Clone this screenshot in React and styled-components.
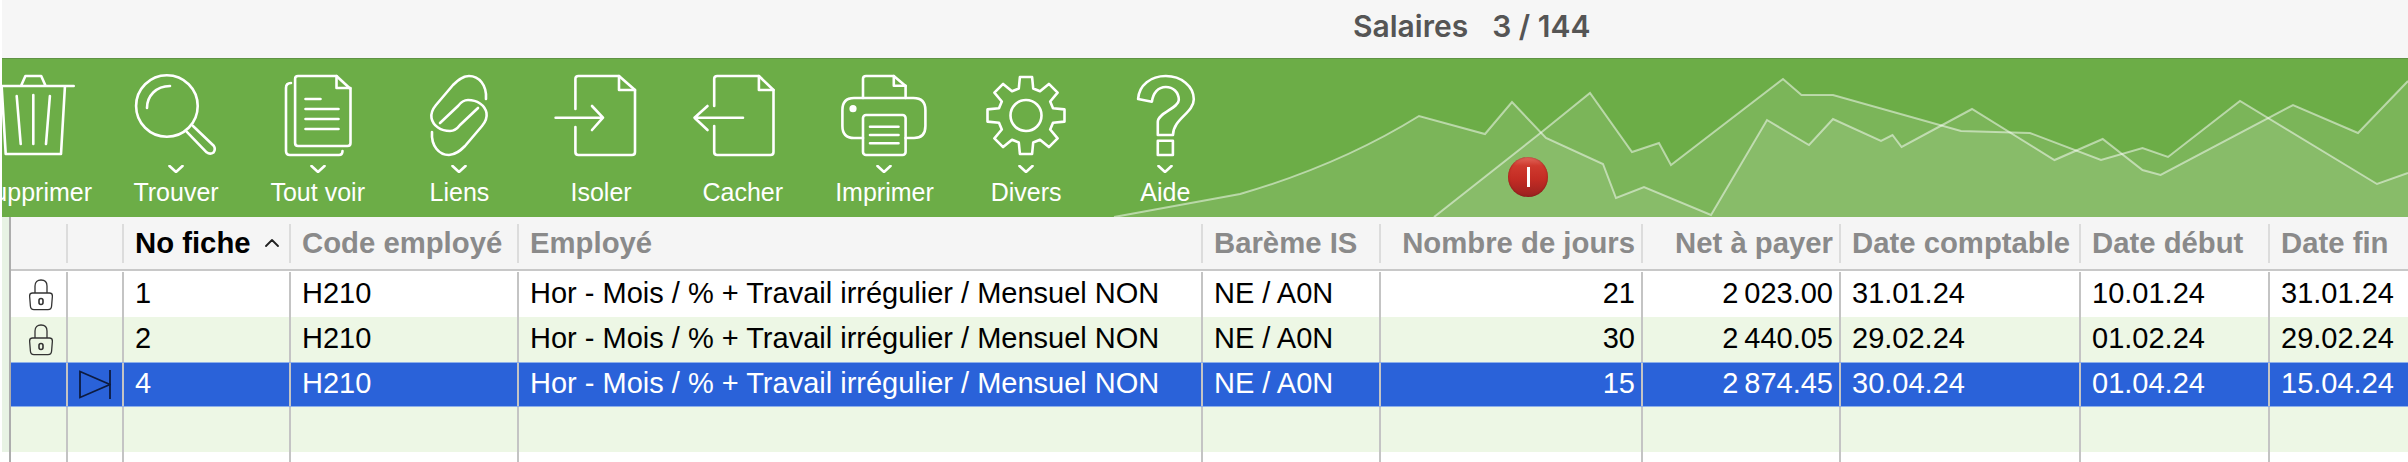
import React from "react";
import styled, { createGlobalStyle } from "styled-components";

const COLUMNS = "57px 56px 167px 228px 684px 178px 262px 198px 240px 189px 1fr";

const GlobalStyle = createGlobalStyle`
  html, body {
    margin: 0;
    padding: 0;
    background: #fff;
    font-family: "Liberation Sans", Arial, sans-serif;
  }
`;

const Page = styled.div`
  width: 2408px;
  height: 462px;
  padding-left: 2px;
  box-sizing: border-box;
  overflow: hidden;
  background: #fff;
`;

const TitleBar = styled.div`
  height: 58px;
  padding-left: 1351px;
  display: flex;
  align-items: center;
  gap: 24px;
  background: #f6f6f6;
  color: #555;
  font-family: Inter, "Liberation Sans", sans-serif;
  font-size: 30px;
  font-weight: 600;
  padding-bottom: 6px;
  box-sizing: border-box;
`;

const Band = styled.div`
  position: relative;
  height: 159px;
  box-sizing: border-box;
  border-top: 1px solid #5f9344;
  background: #6cad47;
  overflow: hidden;
`;

const Chart = styled.svg`
  position: absolute;
  left: -2px;
  top: -59px;
`;

const Toolbar = styled.div`
  position: relative;
  display: flex;
  margin-left: -38.5px;
  padding-top: 16px;
`;

const ToolItem = styled.div`
  flex: 0 0 141.7px;
  margin-left: ${(p) => p.$nudge || 0}px;
  display: flex;
  flex-direction: column;
  align-items: center;
  color: #fff;
`;

const Drop = styled.div`
  height: 8px;
  margin-top: 10px;
  margin-bottom: 5px;
  display: flex;
`;

const ToolLabel = styled.div`
  font-size: 25px;
  line-height: 28px;
  white-space: nowrap;
`;

const Badge = styled.div`
  position: absolute;
  left: 1506px;
  top: 98px;
  width: 40px;
  height: 40px;
  border-radius: 50%;
  background: linear-gradient(#e2685c 0%, #cf3a2e 22%, #c42c24 55%, #9a2120 100%);
  box-shadow: inset 0 0 2px rgba(90, 10, 10, 0.6);
  display: flex;
  align-items: center;
  justify-content: center;

  &::before {
    content: "";
    width: 3px;
    height: 20px;
    background: #fff;
  }
`;

const TableArea = styled.div`
  display: flex;
`;

const Strip = styled.div`
  width: 7px;
  height: 235px;
  background: #e8f3e4;
`;

const Table = styled.div`
  flex: 1;
  min-width: 0;
  border-left: 2px solid #adadad;
  height: 245px;
`;

const HeadRow = styled.div`
  display: grid;
  grid-template-columns: ${COLUMNS};
  align-items: center;
  height: 54px;
  box-sizing: border-box;
  background: #f5f5f5;
  border-bottom: 2px solid #c8c8c8;
`;

const HeadCell = styled.div`
  height: 39px;
  padding: 0 6px 0 11px;
  box-sizing: border-box;
  display: flex;
  align-items: center;
  justify-content: ${(p) => (p.$right ? "flex-end" : "flex-start")};
  gap: 14px;
  border-right: 2px solid #dcdcdc;
  color: ${(p) => (p.$active ? "#000" : "#8a8a8a")};
  font-size: 29.3px;
  font-weight: 700;
  white-space: nowrap;

  &:last-child {
    border-right: 0;
  }
`;

const Body = styled.div`
  padding-top: 1px;
`;

const TONES = {
  white: { bg: "#fff", fg: "#000" },
  green: { bg: "#edf7e5", fg: "#000" },
  selected: { bg: "#2a62d9", fg: "#fff" },
};

const Row = styled.div`
  display: grid;
  grid-template-columns: ${COLUMNS};
  height: 45px;
  box-sizing: border-box;
  background: ${(p) => TONES[p.$tone].bg};
  color: ${(p) => TONES[p.$tone].fg};
  ${(p) => p.$tone === "selected" && "border-top: 1px solid #8eb0ea; border-bottom: 1px solid #8eb0ea;"}
`;

const Cell = styled.div`
  padding: 0 6px 3px 11px;
  box-sizing: border-box;
  display: flex;
  align-items: center;
  justify-content: ${(p) => (p.$right ? "flex-end" : "flex-start")};
  border-right: 2px solid #c4c4c4;
  font-size: 29px;
  white-space: nowrap;

  &:last-child {
    border-right: 0;
  }
`;

const IconCell = styled(Cell)`
  padding: 0 0 0 ${(p) => p.$shift || 0}px;
  justify-content: center;
`;

// drawings

const Icon = ({ children }) => (
  <svg
    width="100"
    height="80"
    viewBox="0 0 100 80"
    fill="none"
    stroke="#fff"
    strokeWidth="2.6"
    strokeLinecap="round"
    strokeLinejoin="round"
    style={{ overflow: "visible", display: "block" }}
  >
    {children}
  </svg>
);

const TrashIcon = () => (
  <Icon>
    <path d="M8.7 11H89.7M37.4 10L41.4 1H57.2L61.2 10M80.9 12L77 79H21.7L17.7 12" />
    <path d="M49.3 20V69M32.7 21L36.7 69M65.9 21L62 69" />
  </Icon>
);

const SearchIcon = () => (
  <Icon>
    <circle cx="40.9" cy="31" r="30.8" />
    <path d="M21 33C21 21 30 11 44 11" />
    <path d="M60.6 56.7L80.6 77.3Q84 80 87.5 77.5Q90 74 87.7 70.7L67 51" />
  </Icon>
);

const DocsIcon = () => (
  <Icon>
    <path d="M30 1H68.5L82.5 14V68Q82.5 71 79.5 71H30Q27.1 71 27.1 68V4Q27.1 1 30 1Z" />
    <path d="M68.5 1V13H82.5" />
    <path d="M23 8Q18 8 18 13V76Q18 80 22 80H71Q74.5 80 74.5 76" />
    <path d="M37.5 24H52.5M37.5 34H70.5M37.5 44H70.5M37.5 54H70.5" />
  </Icon>
);

const LinkIcon = () => (
  <Icon>
    <path d="M77 24C78 10 70 1 60 1C53 1 48 6 44 10L27 30C22 36 22 40 22.5 43C24 51 32 56 41 56C44 56 48 54 51 50L69 33" />
    <path d="M23 57C22 71 30 80 40 80C47 80 52 75 56 71L73 51C78 45 78 41 77.5 38C76 30 68 25 59 25C56 25 52 27 49 31L31 48" />
  </Icon>
);

const ExportIcon = () => (
  <Icon>
    <path d="M24.4 34V4Q24.4 1 27.4 1H68L84 15V77Q84 80 81 80H27.4Q24.4 80 24.4 77V52" />
    <path d="M68 1V15H84" />
    <path d="M4.6 42.7H52M41 31L52 42.7L41 55" />
  </Icon>
);

const ImportIcon = () => (
  <Icon>
    <path d="M21.2 31V4Q21.2 1 24.2 1H65.9L80.5 15V77Q80.5 80 77.5 80H24.2Q21.2 80 21.2 77V51" />
    <path d="M65.9 1V15H80.5" />
    <path d="M50 42.7H1.5M14.5 31L1.5 42.7L14.5 55" />
  </Icon>
);

const PrintIcon = () => (
  <Icon>
    <path d="M29 23V4Q29 1 32 1H59.8L71.6 11V23" />
    <path d="M59.8 1V10.7H71.6" />
    <path d="M29 63H20Q8.4 63 8.4 51V35Q8.4 23 20 23H79.4Q91.4 23 91.4 35V51Q91.4 63 80 63H71.6" />
    <rect x="29" y="40" width="42.6" height="40" rx="3" />
    <path d="M36 51.7H64.5M36 60H64.5M36 68.3H64.5" />
    <circle cx="19" cy="33.7" r="3.6" fill="#fff" stroke="none" />
  </Icon>
);

const gearPath = () => {
  const pt = (r, deg) => {
    const a = ((deg - 90) * Math.PI) / 180;
    return `${(50 + r * Math.cos(a)).toFixed(1)} ${(40.5 + r * Math.sin(a)).toFixed(1)}`;
  };
  let d = "";
  for (let i = 0; i < 8; i++) {
    const a = i * 45;
    d += `${i ? "L" : "M"}${pt(28, a - 15)}L${pt(39, a - 9)}L${pt(39, a + 9)}L${pt(28, a + 15)}`;
  }
  return d + "Z";
};

const GearIcon = () => (
  <Icon>
    <path d={gearPath()} />
    <circle cx="50" cy="40.5" r="15.5" />
  </Icon>
);

const HelpIcon = () => (
  <Icon>
    <path d="M23.1 24C24 10 36 1 50.8 1C66 1 78.8 11 78.8 24.3C78.8 38 58 44 58 60H42.8V46.7C42.8 38 63.8 33 63.8 25C63.8 17 58 12 50.8 12C43 12 38 18 36.9 26.7Z" />
    <rect x="42.8" y="65.7" width="15.1" height="14.3" />
  </Icon>
);

const Chevron = () => (
  <svg width="16" height="8" viewBox="0 0 16 8" fill="none" stroke="#fff" strokeWidth="2.6" strokeLinecap="round">
    <path d="M1.5 1L8 7L14.5 1" />
  </svg>
);

const SortCaret = () => (
  <svg width="14" height="8" viewBox="0 0 14 8" fill="none" stroke="#222" strokeWidth="1.8" strokeLinecap="round" strokeLinejoin="round">
    <path d="M1 7L7 1L13 7" />
  </svg>
);

const LockIcon = () => (
  <svg width="24" height="32" viewBox="0 0 24 32" fill="none" stroke="#333" strokeWidth="1.3">
    <path d="M6 14V7C6 3 8.5 1 12 1C15.5 1 18 3 18 7V14" />
    <path d="M3.5 14H20.5Q23.4 14 23.4 17L22.6 27Q22.4 30.6 19 30.6H5Q1.6 30.6 1.4 27L0.6 17Q0.6 14 3.5 14Z" />
    <rect x="10" y="19.5" width="4" height="6" rx="2" strokeWidth="1.6" />
  </svg>
);

const RowMarker = () => (
  <svg width="32" height="29" viewBox="0 0 32 29" fill="none" stroke="#0d1b40" strokeWidth="1.8">
    <path d="M1 1.5L31 14.5L1 27.5Z" />
    <path d="M31 0V29" />
  </svg>
);

const LINE_A =
  "1114,217 1240,194 Q1340,165 1419,116 L1485,134 1512,102 1546,138 1603,164 1616,198 1644,187 1711,215 1767,120 1809,145 1833,119 1881,141 1892.5,135 1901.6,147 1972,109 2054.5,160 2102.7,139 2142.5,170 2160.6,175 2293,105 2358,133 2408,81";
const LINE_B =
  "1434,217 1540.5,133 1590,93 1632,152 1659,143 1671,165 1783,79 1801.5,95 1833,95 1961,131 2030,133 2101,160 2142.5,148 2168,157 2240,101 2377,184 2408,173";

const Ridges = () => (
  <Chart width="2408" height="217" viewBox="0 0 2408 217">
    <path d={`M${LINE_A} V217 Z`} fill="#fff" fillOpacity="0.1" />
    <path d={`M${LINE_B} V217 Z`} fill="#fff" fillOpacity="0.1" />
    <path d={`M${LINE_A}`} fill="none" stroke="#fff" strokeOpacity="0.5" strokeWidth="2" />
    <path d={`M${LINE_B}`} fill="none" stroke="#fff" strokeOpacity="0.5" strokeWidth="2" />
  </Chart>
);

const TOOLS = [
  { label: "Supprimer", icon: TrashIcon },
  { label: "Trouver", icon: SearchIcon, drop: true },
  { label: "Tout voir", icon: DocsIcon, drop: true },
  { label: "Liens", icon: LinkIcon, drop: true },
  { label: "Isoler", icon: ExportIcon },
  { label: "Cacher", icon: ImportIcon },
  { label: "Imprimer", icon: PrintIcon, drop: true },
  { label: "Divers", icon: GearIcon, drop: true },
  { label: "Aide", icon: HelpIcon, drop: true, nudge: -2.5 },
];

const HEADERS = [
  { title: "" },
  { title: "" },
  { title: "No fiche", active: true },
  { title: "Code employé" },
  { title: "Employé" },
  { title: "Barème IS" },
  { title: "Nombre de jours", right: true },
  { title: "Net à payer", right: true },
  { title: "Date comptable" },
  { title: "Date début" },
  { title: "Date fin" },
];

const EMPLOYEE = "Hor - Mois / % + Travail irrégulier / Mensuel NON";

const ROWS = [
  { tone: "white", locked: true, no: "1", days: "21", net: "2\u202f023.00", dates: ["31.01.24", "10.01.24", "31.01.24"] },
  { tone: "green", locked: true, no: "2", days: "30", net: "2\u202f440.05", dates: ["29.02.24", "01.02.24", "29.02.24"] },
  { tone: "selected", current: true, no: "4", days: "15", net: "2\u202f874.45", dates: ["30.04.24", "01.04.24", "15.04.24"] },
];

const EmptyRow = ({ tone }) => (
  <Row $tone={tone}>
    {HEADERS.map((h, i) => (
      <Cell key={i} />
    ))}
  </Row>
);

export default function App() {
  return (
    <Page>
      <GlobalStyle />
      <TitleBar>
        <span>Salaires</span>
        <span>3 / 144</span>
      </TitleBar>
      <Band>
        <Ridges />
        <Toolbar>
          {TOOLS.map(({ label, icon: Glyph, drop, nudge }) => (
            <ToolItem key={label} $nudge={nudge}>
              <Glyph />
              <Drop>{drop && <Chevron />}</Drop>
              <ToolLabel>{label}</ToolLabel>
            </ToolItem>
          ))}
        </Toolbar>
        <Badge />
      </Band>
      <TableArea>
        <Strip />
        <Table>
          <HeadRow>
            {HEADERS.map((h, i) => (
              <HeadCell key={i} $right={h.right} $active={h.active}>
                {h.title}
                {h.active && <SortCaret />}
              </HeadCell>
            ))}
          </HeadRow>
          <Body>
            {ROWS.map((r) => (
              <Row key={r.no} $tone={r.tone}>
                <IconCell $shift={5}>{r.locked && <LockIcon />}</IconCell>
                <IconCell>{r.current && <RowMarker />}</IconCell>
                <Cell>{r.no}</Cell>
                <Cell>H210</Cell>
                <Cell>{EMPLOYEE}</Cell>
                <Cell>NE / A0N</Cell>
                <Cell $right>{r.days}</Cell>
                <Cell $right>{r.net}</Cell>
                {r.dates.map((d, i) => (
                  <Cell key={i}>{d}</Cell>
                ))}
              </Row>
            ))}
            <EmptyRow tone="green" />
            <EmptyRow tone="white" />
          </Body>
        </Table>
      </TableArea>
    </Page>
  );
}
